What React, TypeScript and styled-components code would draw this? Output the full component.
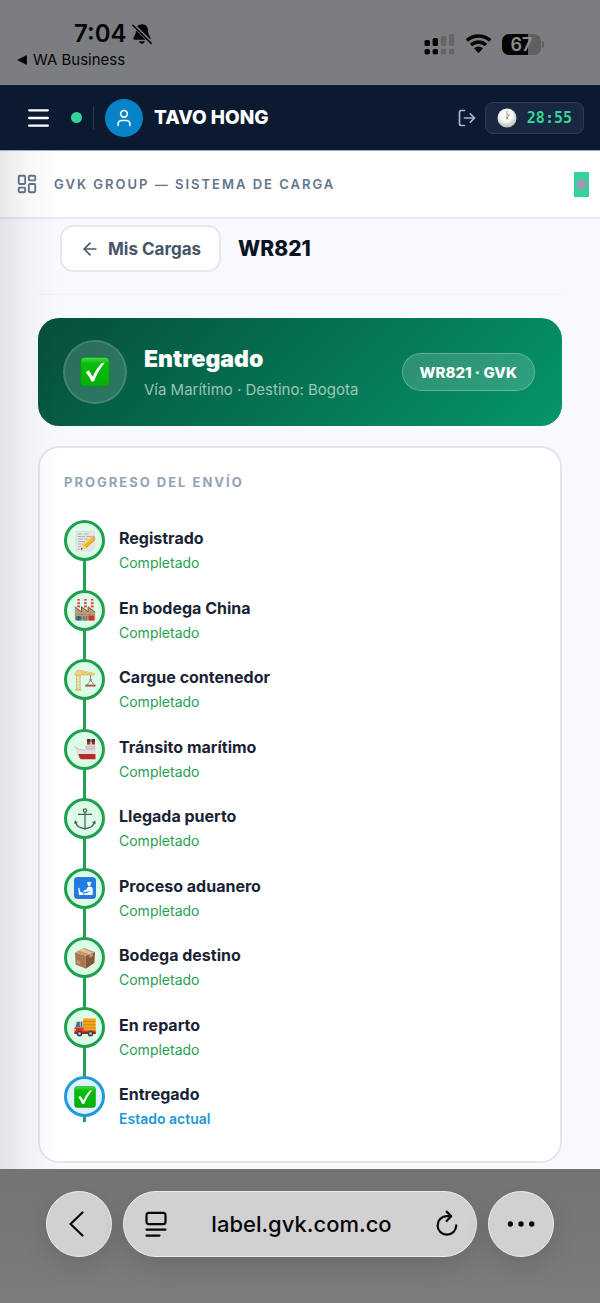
import type { ReactNode } from 'react';
import styled, { createGlobalStyle } from 'styled-components';
import { ArrowLeft, LayoutDashboard, LogOut, User } from 'lucide-react';

const GlobalStyle = createGlobalStyle`
  * {
    box-sizing: border-box;
  }
  body {
    margin: 0;
    background: #7b7c7e;
    font-family: Inter, 'Liberation Sans', sans-serif;
  }
  button {
    font-family: inherit;
    cursor: pointer;
  }
`;

const Screen = styled.div`
  min-height: 100vh;
  display: flex;
  flex-direction: column;
`;

const StatusBar = styled.div`
  height: 85px;
  padding: 20px 56px 0 17px;
  display: flex;
  justify-content: space-between;
  background: #7c7d80;
  color: #060606;
`;

const StatusLeft = styled.div`
  display: flex;
  flex-direction: column;
`;

const Clock = styled.div`
  display: flex;
  align-items: center;
  gap: 4px;
  padding-left: 57px;
  font-size: 24px;
  line-height: 28px;
  font-weight: 600;
`;

const BackToApp = styled.a`
  display: flex;
  align-items: center;
  gap: 6px;
  color: inherit;
  text-decoration: none;
  font-size: 15px;
  line-height: 24px;
`;

const StatusRight = styled.div`
  display: flex;
  align-items: center;
  gap: 10px;
  height: 48px;
`;

const Battery = styled.div`
  display: flex;
  align-items: center;
  gap: 1px;

  &::after {
    content: '';
    width: 2px;
    height: 7px;
    border-radius: 0 2px 2px 0;
    background: #5f6062;
  }
`;

const BatteryBody = styled.span`
  width: 39px;
  height: 21px;
  border-radius: 7px;
  background: linear-gradient(to right, #040404 67%, #5f6062 67%);
  color: #8c8d8f;
  font-size: 18px;
  line-height: 21px;
  font-weight: 600;
  text-align: center;
`;

const Nav = styled.nav`
  height: 66px;
  padding: 0 16px 0 28px;
  display: flex;
  align-items: center;
  gap: 11px;
  background: #0b1a30;
  border-bottom: 1px solid #a5a9bb;
`;

const NavActions = styled.div`
  display: flex;
  align-items: center;
  gap: 8px;
`;

const IconButton = styled.button`
  display: flex;
  padding: 0;
  border: none;
  background: none;
  color: ${(props) => props.color || '#fff'};
`;

const OnlineDot = styled.span`
  width: 11px;
  height: 11px;
  margin-left: 11px;
  border-radius: 50%;
  background: #34d399;
`;

const Divider = styled.span`
  width: 1px;
  height: 22px;
  background: #2b394d;
`;

const Avatar = styled.span`
  width: 38px;
  height: 38px;
  display: flex;
  align-items: center;
  justify-content: center;
  border-radius: 50%;
  background: #0784c7;
  color: #fff;
`;

const UserName = styled.span`
  flex: 1;
  color: #fff;
  font-size: 19px;
  font-weight: 800;
`;

const Timer = styled.span`
  height: 32px;
  padding: 0 11px;
  display: flex;
  align-items: center;
  gap: 10px;
  border: 1px solid #2f3b52;
  border-radius: 8px;
  background: #1a2740;
  color: #34d399;
  font-family: 'DejaVu Sans Mono', monospace;
  font-size: 15px;
  font-weight: 700;
`;

const Page = styled.div`
  position: relative;
  flex: 1;
  display: flex;
  flex-direction: column;
  background: #f8f9fd;

  &::after {
    content: '';
    position: absolute;
    top: 0;
    bottom: 0;
    left: 0;
    width: 60px;
    background: linear-gradient(
      to right,
      rgba(0, 0, 0, 0.09),
      rgba(0, 0, 0, 0.03) 45%,
      rgba(0, 0, 0, 0)
    );
    pointer-events: none;
  }
`;

const SubHeader = styled.header`
  height: 68px;
  padding: 0 11px 0 16px;
  display: flex;
  align-items: center;
  gap: 16px;
  background: #fff;
  border-bottom: 2px solid #e7e9ee;
  color: #64748b;
`;

const SystemName = styled.span`
  flex: 1;
  font-size: 13px;
  font-weight: 600;
  letter-spacing: 2px;
`;

const StatusChip = styled.span`
  width: 15px;
  height: 25px;
  display: flex;
  align-items: center;
  justify-content: center;
  background: #34d399;

  &::after {
    content: '';
    width: 11px;
    height: 11px;
    border-radius: 50%;
    background: #939db4;
  }
`;

const Main = styled.main`
  flex: 1;
  display: flex;
  flex-direction: column;
  padding: 6px 38px;
`;

const TitleRow = styled.div`
  display: flex;
  align-items: center;
  gap: 17px;
  padding: 0 22px 22px;
  margin-bottom: 23px;
  border-bottom: 1px solid #f0f2f6;
`;

const BackButton = styled.button`
  height: 47px;
  padding: 0 18px;
  display: flex;
  align-items: center;
  gap: 8px;
  border: 2px solid #e6e8ef;
  border-radius: 13px;
  background: #fff;
  color: #475569;
  font-size: 17px;
  font-weight: 700;
`;

const Title = styled.h1`
  margin: 0;
  color: #0b1224;
  font-size: 21px;
  font-weight: 800;
`;

const Banner = styled.section`
  display: flex;
  align-items: center;
  gap: 17px;
  margin-bottom: 20px;
  padding: 22px 27px 22px 25px;
  border-radius: 21px;
  background: linear-gradient(135deg, #064e3b, #059669);
`;

const BannerIcon = styled.span`
  width: 64px;
  height: 64px;
  display: flex;
  align-items: center;
  justify-content: center;
  border: 2px solid rgba(255, 255, 255, 0.12);
  border-radius: 50%;
  background: rgba(255, 255, 255, 0.15);
`;

const BannerText = styled.div`
  flex: 1;
  padding-top: 6px;
`;

const BannerTitle = styled.h2`
  margin: 0 0 4px;
  color: #fff;
  font-size: 23px;
  line-height: 26px;
  font-weight: 900;
`;

const BannerInfo = styled.p`
  margin: 0;
  color: rgba(255, 255, 255, 0.6);
  font-size: 15px;
  line-height: 28px;
`;

const Pill = styled.span`
  height: 38px;
  padding: 0 17px;
  display: flex;
  align-items: center;
  border: 1px solid rgba(255, 255, 255, 0.25);
  border-radius: 19px;
  background: rgba(255, 255, 255, 0.16);
  color: #fff;
  font-size: 15px;
  font-weight: 800;
`;

const Card = styled.section`
  flex: 1;
  display: flex;
  flex-direction: column;
  padding: 24px 24px 30px;
  border: 2px solid #e2e5ef;
  border-radius: 21px;
  background: #fff;
`;

const CardTitle = styled.h3`
  margin: 0 0 28px;
  color: #94a3b8;
  font-size: 13px;
  line-height: 20px;
  font-weight: 700;
  letter-spacing: 2px;
  text-transform: uppercase;
`;

const Steps = styled.ol`
  position: relative;
  flex: 1;
  display: flex;
  flex-direction: column;
  justify-content: space-between;
  margin: 0;
  padding: 0;
  list-style: none;

  &::before {
    content: '';
    position: absolute;
    top: 20px;
    bottom: 9px;
    left: 19px;
    width: 3px;
    background: #22a055;
  }
`;

const StepItem = styled.li`
  position: relative;
  display: flex;
  gap: 14px;
`;

const StepCircle = styled.span<{ $current?: boolean }>`
  width: 41px;
  height: 41px;
  display: flex;
  align-items: center;
  justify-content: center;
  border: 3px solid ${(props) => (props.$current ? '#1d9bdb' : '#1ea14f')};
  border-radius: 50%;
  background: ${(props) => (props.$current ? '#e0f2fe' : '#dcfce7')};
`;

const StepText = styled.div`
  padding-top: 6px;
`;

const StepName = styled.div`
  color: #1a2336;
  font-size: 16px;
  line-height: 25px;
  font-weight: 700;
`;

const StepState = styled.div<{ $current?: boolean }>`
  color: ${(props) => (props.$current ? '#1d97d4' : '#26a052')};
  font-size: 14px;
  line-height: 24px;
  font-weight: ${(props) => (props.$current ? 600 : 400)};
`;

const BrowserBar = styled.footer`
  height: 134px;
  padding: 22px 46px 0;
  display: flex;
  align-items: flex-start;
  gap: 11px;
  background: linear-gradient(#737476, #7b7c7e);
`;

const RoundButton = styled.button`
  width: 66px;
  height: 66px;
  padding: 0;
  display: flex;
  align-items: center;
  justify-content: center;
  border: 1px solid #ececec;
  border-radius: 50%;
  background: #d1d1d1;
  box-shadow: 0 8px 26px rgba(0, 0, 0, 0.12);
  color: #060606;
`;

const UrlBar = styled.div`
  flex: 1;
  height: 66px;
  padding: 0 17px 0 20px;
  display: flex;
  align-items: center;
  justify-content: space-between;
  border: 1px solid #ececec;
  border-radius: 33px;
  background: #d1d1d1;
  box-shadow: 0 8px 26px rgba(0, 0, 0, 0.12);
  color: #060606;
  font-size: 22px;
  font-weight: 500;
`;

const Glyph = ({ size = 22, children }: { size?: number; children: ReactNode }) => (
  <svg width={size} height={size} viewBox='0 0 22 22' aria-hidden='true'>
    {children}
  </svg>
);

const CheckGlyph = ({ size }: { size?: number }) => (
  <Glyph size={size}>
    <defs>
      <linearGradient id='check' x1='0' y1='0' x2='0' y2='1'>
        <stop offset='0' stopColor='#43dc45' />
        <stop offset='0.2' stopColor='#09bd0d' />
        <stop offset='1' stopColor='#04b008' />
      </linearGradient>
    </defs>
    <rect x='0.3' y='0.3' width='21.4' height='21.4' rx='3' fill='#0b9a14' />
    <rect x='0.9' y='0.6' width='20.2' height='20.2' rx='2.6' fill='url(#check)' />
    <path
      d='M4.2 11.2 6.3 9.8Q8 11.8 9.2 14.5 12 8.4 15.8 4.4L18.2 4.2Q13 10.5 10.3 17.8L8.4 17.9Q6.8 14.2 4.2 11.2Z'
      fill='#fff'
    />
  </Glyph>
);

const MemoGlyph = () => (
  <Glyph>
    <path d='M2 1.5h18.5v15.8L17 21H2z' fill='#e3e5e6' stroke='#cdd1d1' strokeWidth='0.5' />
    <path
      d='M4 4h4m1.5 0h5M4 6.5h7m1.5 0H17M4 9h5m1 0h4M4 11.5h7M4 14h3m1 0h1M4 16.5h3M4 19h4'
      stroke='#a3a8a9'
      strokeWidth='0.8'
    />
    <path d='M7 19.6 8.4 14.2 17.4 6.2 21.2 10.1 12.4 18.1z' fill='#edb72b' />
    <path d='M9.6 14.6 18.2 7' stroke='#ffd965' strokeWidth='1.4' />
    <path d='M12 17.6 20.7 9.7' stroke='#d89019' strokeWidth='0.9' />
    <path d='m17 7 1.5-1.3q2.6-.2 3.2 2.8l-1.2 2z' fill='#e6a4a0' />
    <path d='M7 19.6 8.4 14.2l4 3.9z' fill='#efd3a0' />
    <path d='m7 19.6.5-1.9 1.4 1.4z' fill='#35322f' />
  </Glyph>
);

const FactoryGlyph = () => (
  <Glyph>
    {[3.4, 10.2, 17].map((x) => (
      <g key={x}>
        <path d={`M${x} 0h2.4l.5 11h-3.4z`} fill='#e9dfd6' />
        <path
          d={`M${x} 0h2.4v1.6h-2.4zM${x - 0.1} 3.2h2.600v1.800h-2.600zM${x - 0.2} 6.600h2.800v1.600h-2.800z`}
          fill='#d8423a'
        />
      </g>
    ))}
    <path d='M.8 7.800 7.500 13V7.800l6.600 5V7.800l7 5.400V21.500H.8z' fill='#b99c73' />
    <path d='M.8 7.800 7.500 13V7.800l6.600 5V7.800l7 5.400' fill='none' stroke='#6e5543' strokeWidth='1' />
    <path d='M.8 15.500h20.300' stroke='#a18460' strokeWidth='0.6' />
    <path d='M2.200 17h5.200v4.500H2.200z' fill='#3c7795' />
    <path d='M4.800 17v4.500M2.200 19h5.200' stroke='#233d4b' strokeWidth='0.5' />
    <path d='M8.800 17h4.400v4.500H8.800z' fill='#557f86' />
    <path d='M11 17v4.500' stroke='#e4d6b5' strokeWidth='0.5' />
    <path d='M14.600 16.600h5.600v4.900h-5.600z' fill='#d92c2b' />
  </Glyph>
);

const CraneGlyph = () => (
  <Glyph>
    <path d='M2.5 21V2h3.6v19' fill='none' stroke='#dcb65e' strokeWidth='1' />
    <path
      d='m2.5 5.5 3.6 3-3.6 3 3.6 3-3.6 3 3.6 3m0-15-3.6 3 3.6 3-3.6 3 3.6 3-3.6 3'
      fill='none'
      stroke='#e3c378'
      strokeWidth='0.7'
    />
    <path d='M.8 4.5 4.3 1 20.5 4.3v1.8H.8z' fill='#f2d783' stroke='#d9b25a' strokeWidth='0.6' />
    <path d='m7 2.2 2 3.8 2.2-3 2.2 3 2-2 2 2' fill='none' stroke='#cfa955' strokeWidth='0.6' />
    <path d='M1 21h6.2' stroke='#c9a04c' strokeWidth='1' />
    <path d='M16.6 6v5.5l-3.5 4.2m3.5-4.2 3.4 4.2' fill='none' stroke='#575552' strokeWidth='0.7' />
    <path d='M11.2 15.6h10.4v2H11.2z' fill='#a85648' />
    <path d='M15.6 10h2v2h-2z' fill='#807b71' />
  </Glyph>
);

const ShipGlyph = () => (
  <Glyph>
    <path d='M13 1h3.4v8H13zM17.6 1H21v8h-3.4z' fill='#b52a29' />
    <path d='M13 1h3.4v3H13zM17.6 1H21v3h-3.4z' fill='#45383b' />
    <path d='M11 6.5h10.5v7H11z' fill='#dedcdc' />
    <path d='M12 8.8h9.5M12 11h9.5' stroke='#999da2' strokeWidth='0.9' strokeDasharray='1 0.6' />
    <path d='M.5 8.5q5 4 10 3.6l11 .2v9H6.4Q2.4 15.5.5 8.5z' fill='#e4dfdd' />
    <path d='M4.4 16h17.1v5.3H6.6Q4.6 18.4 4.4 16z' fill='#b22a29' />
    <path d='M.5 8.5q5 4.2 10.5 3.8' fill='none' stroke='#a8a19f' strokeWidth='0.6' />
  </Glyph>
);

const AnchorGlyph = () => (
  <Glyph>
    <g fill='none' stroke='#4d5b5c' strokeWidth='1.2' strokeLinecap='round'>
      <circle cx='11' cy='2.5' r='1.7' />
      <path d='M11 4.3V20M5 6.3h12' />
      <path d='M1.6 14.2Q2.6 20.2 11 20.6q8.4-.4 9.4-6.4' strokeWidth='1.3' />
    </g>
    <path d='m.3 16 .5-3.8L4 14.9zM21.7 16l-.5-3.8-3.2 2.7zM9.4 20.5h3.2L11 22z' fill='#4d5b5c' />
    <circle cx='5' cy='6.3' r='0.9' fill='#4d5b5c' />
    <circle cx='17' cy='6.3' r='0.9' fill='#4d5b5c' />
  </Glyph>
);

const CustomsGlyph = () => (
  <Glyph>
    <rect x='0.2' y='0.2' width='21.6' height='21.6' rx='3.2' fill='#1257b8' />
    <rect x='0.8' y='0.6' width='20.4' height='20.2' rx='2.8' fill='#1f7ce8' />
    <path d='M12.8 5.4q2.4-1.3 4.800 0l-.7 1.300h-3.400z' fill='#fff' />
    <circle cx='15.2' cy='7.6' r='1.5' fill='#fff' />
    <path d='M14 9.800h3.200q1.500.5 1.500 3V18h-8.500v-1.600l3-.8-.4-1.400-3 1.200-.8-1.200 3.500-2z' fill='#fff' />
    <path d='m4.200 11 1-.3 1.200 4 3 1.400V18H5z' fill='#fff' />
    <path d='m12.400 15.800 3.400-2' stroke='#1f7ce8' strokeWidth='0.8' />
  </Glyph>
);

const PackageGlyph = () => (
  <Glyph>
    <path d='M1 5.4 11.8 8.7v13L1.6 17.6z' fill='#a97650' />
    <path d='M21 5 11.8 8.7v13L20.4 16z' fill='#865637' />
    <path d='M1 5.4 10.2 1 21 5l-9.2 3.7z' fill='#c7966b' />
    <path d='m5 3.5 3.8-1.8L19 5.8l-3.8 1.5z' fill='#e1c39e' />
    <path d='m15.2 7.3 3.8-1.5v3.5l-3.8 1.8z' fill='#b99370' />
    <path d='m3 13.5 3.2 1.2v2.6L3 16z' fill='#c69e7b' />
  </Glyph>
);

const TruckGlyph = () => (
  <Glyph>
    <path d='M9 2.3h12.7v12.9H9z' fill='#f2a51f' />
    <path d='M9 5.5h12.7M9 8.7h12.7M9 11.9h12.7' stroke='#c97d16' strokeWidth='0.7' />
    <path d='M9 2.6h12.7' stroke='#ffcc57' strokeWidth='0.8' />
    <path d='M2.2 5h6.5v8H.8z' fill='#b9d3df' />
    <path d='M2.9 6h3v5.2H1.6zM6.7 6h1.6v5.2H6.7z' fill='#477184' />
    <path d='M.5 11.5h9v3h12.2v3.4H.5z' fill='#dc3026' />
    <path d='M.5 16h21.2v2H.5z' fill='#a7221c' />
    <path d='M.5 13h1.4v1.3H.5z' fill='#ffdd78' />
    {[5.5, 16.5].map((x) => (
      <g key={x}>
        <circle cx={x} cy='17.6' r='2.9' fill='#3d4144' />
        <circle cx={x} cy='17.6' r='1.4' fill='#b7bdc1' />
      </g>
    ))}
  </Glyph>
);

const ClockGlyph = () => (
  <Glyph size={20}>
    <defs>
      <radialGradient id='face' cx='0.45' cy='0.35' r='0.65'>
        <stop offset='0.5' stopColor='#f7f7f5' />
        <stop offset='1' stopColor='#b9babb' />
      </radialGradient>
    </defs>
    <circle cx='11' cy='11' r='10.5' fill='url(#face)' />
    <path d='M11 3v8.5l2.8-5' fill='none' stroke='#8a8a88' strokeWidth='0.9' />
    <circle cx='11' cy='11.3' r='0.8' fill='#8a8a88' />
  </Glyph>
);

const steps = [
  { name: 'Registrado', icon: <MemoGlyph /> },
  { name: 'En bodega China', icon: <FactoryGlyph /> },
  { name: 'Cargue contenedor', icon: <CraneGlyph /> },
  { name: 'Tránsito marítimo', icon: <ShipGlyph /> },
  { name: 'Llegada puerto', icon: <AnchorGlyph /> },
  { name: 'Proceso aduanero', icon: <CustomsGlyph /> },
  { name: 'Bodega destino', icon: <PackageGlyph /> },
  { name: 'En reparto', icon: <TruckGlyph /> },
  { name: 'Entregado', icon: <CheckGlyph />, current: true },
];

function App() {
  return (
    <Screen>
      <GlobalStyle />
      <StatusBar>
        <StatusLeft>
          <Clock>
            7:04
            <svg width='22' height='22' viewBox='0 0 22 22' fill='currentColor'>
              <path d='M11 1.2c3.9 0 6 2.8 6 6.4 0 4.7 2.6 5.6 2.6 8 0 .8-.5 1.2-1.3 1.2H3.7c-.8 0-1.3-.4-1.3-1.2 0-2.4 2.6-3.3 2.6-8 0-3.6 2.1-6.4 6-6.4zM8.2 18.3h5.6c-.2 1.5-1.3 2.500-2.800 2.500s-2.600-1-2.800-2.500z' />
              <path d='m1.8 1.6 19 18.8' stroke='#7c7d80' strokeWidth='3.6' />
              <path d='m1.8 2.2 18.4 18.2' stroke='currentColor' strokeWidth='1.5' strokeLinecap='round' />
            </svg>
          </Clock>
          <BackToApp href='#'>
            <svg width='10' height='10' viewBox='0 0 10 10' fill='currentColor'>
              <path d='M.8 5 9.5.6v8.8z' stroke='currentColor' strokeWidth='0.8' strokeLinejoin='round' />
            </svg>
            WA Business
          </BackToApp>
        </StatusLeft>
        <StatusRight>
          <svg width='31' height='22' viewBox='0 0 31 22'>
            <g fill='#060606'>
              <rect x='0.5' y='7' width='5.4' height='6' rx='1.6' />
              <rect x='8.6' y='5' width='5.4' height='8' rx='1.6' />
              <rect x='0.5' y='16' width='5.4' height='5.4' rx='1.6' />
              <rect x='8.6' y='16' width='5.4' height='5.4' rx='1.6' />
            </g>
            <g fill='#646567'>
              <rect x='16.8' y='3' width='5.4' height='10' rx='1.6' />
              <rect x='25' y='1' width='5.4' height='12' rx='1.6' />
              <rect x='16.8' y='16' width='5.4' height='5.4' rx='1.6' />
              <rect x='25' y='16' width='5.4' height='5.4' rx='1.6' />
            </g>
          </svg>
          <svg width='27' height='20' viewBox='0 0 27 20'>
            <path
              d='M1.8 6.6Q6.8 2 13.5 2t11.7 4.6M6 11q3.3-3 7.5-3t7.5 3'
              fill='none'
              stroke='#060606'
              strokeWidth='3.4'
            />
            <path d='M9 14.2Q11 12.4 13.5 12.4T18 14.2L14.2 18.6Q13.5 19.2 12.8 18.6z' fill='#060606' />
          </svg>
          <Battery>
            <BatteryBody>67</BatteryBody>
          </Battery>
        </StatusRight>
      </StatusBar>

      <Nav>
        <IconButton aria-label='Menú'>
          <svg width='21' height='18' viewBox='0 0 21 18'>
            <path
              d='M1.2 1.3h18.6M1.2 9h18.6M1.2 16.7h18.6'
              stroke='currentColor'
              strokeWidth='2.3'
              strokeLinecap='round'
            />
          </svg>
        </IconButton>
        <OnlineDot />
        <Divider />
        <Avatar>
          <User size={20} />
        </Avatar>
        <UserName>TAVO HONG</UserName>
        <NavActions>
          <IconButton aria-label='Salir' color='#a9b6cc'>
            <LogOut size={20} />
          </IconButton>
          <Timer>
            <ClockGlyph />
            28:55
          </Timer>
        </NavActions>
      </Nav>

      <Page>
        <SubHeader>
          <LayoutDashboard size={22} />
          <SystemName>GVK GROUP — SISTEMA DE CARGA</SystemName>
          <StatusChip />
        </SubHeader>
        <Main>
          <TitleRow>
            <BackButton>
              <ArrowLeft size={20} />
              Mis Cargas
            </BackButton>
            <Title>WR821</Title>
          </TitleRow>
          <Banner>
            <BannerIcon>
              <CheckGlyph size={30} />
            </BannerIcon>
            <BannerText>
              <BannerTitle>Entregado</BannerTitle>
              <BannerInfo>Vía Marítimo · Destino: Bogota</BannerInfo>
            </BannerText>
            <Pill>WR821 · GVK</Pill>
          </Banner>
          <Card>
            <CardTitle>Progreso del envío</CardTitle>
            <Steps>
              {steps.map((step) => (
                <StepItem key={step.name}>
                  <StepCircle $current={step.current}>{step.icon}</StepCircle>
                  <StepText>
                    <StepName>{step.name}</StepName>
                    <StepState $current={step.current}>
                      {step.current ? 'Estado actual' : 'Completado'}
                    </StepState>
                  </StepText>
                </StepItem>
              ))}
            </Steps>
          </Card>
        </Main>
      </Page>

      <BrowserBar>
        <RoundButton aria-label='Atrás'>
          <svg width='30' height='30' viewBox='0 0 30 30' fill='none'>
            <path
              d='M18.5 3.5 6.5 15l12 11.5'
              stroke='currentColor'
              strokeWidth='2.2'
              strokeLinecap='round'
              strokeLinejoin='round'
            />
          </svg>
        </RoundButton>
        <UrlBar>
          <IconButton aria-label='Página' color='#060606'>
            <svg width='24' height='28' viewBox='0 0 24 28' fill='none'>
              <g stroke='currentColor' strokeWidth='2.2' strokeLinecap='round'>
                <rect x='2.5' y='2.8' width='19' height='11.4' rx='2.4' />
                <path d='M2.5 19.6h19M2.5 25.6h13' />
              </g>
            </svg>
          </IconButton>
          label.gvk.com.co
          <IconButton aria-label='Recargar' color='#060606'>
            <svg width='24' height='28' viewBox='0 0 24 28' fill='none'>
              <g stroke='currentColor' strokeWidth='2.2' strokeLinecap='round' strokeLinejoin='round'>
                <path d='M21.2 15.4a9.3 9.3 0 1 1-9.3-9.3h4' />
                <path d='m11.600 1.600 4.600 4.600-4.600 4.800' />
              </g>
            </svg>
          </IconButton>
        </UrlBar>
        <RoundButton aria-label='Más'>
          <svg width='28' height='6' viewBox='0 0 28 6' fill='currentColor'>
            <circle cx='3.3' cy='3' r='2.7' />
            <circle cx='14' cy='3' r='2.7' />
            <circle cx='24.7' cy='3' r='2.7' />
          </svg>
        </RoundButton>
      </BrowserBar>
    </Screen>
  );
}
export default App;
